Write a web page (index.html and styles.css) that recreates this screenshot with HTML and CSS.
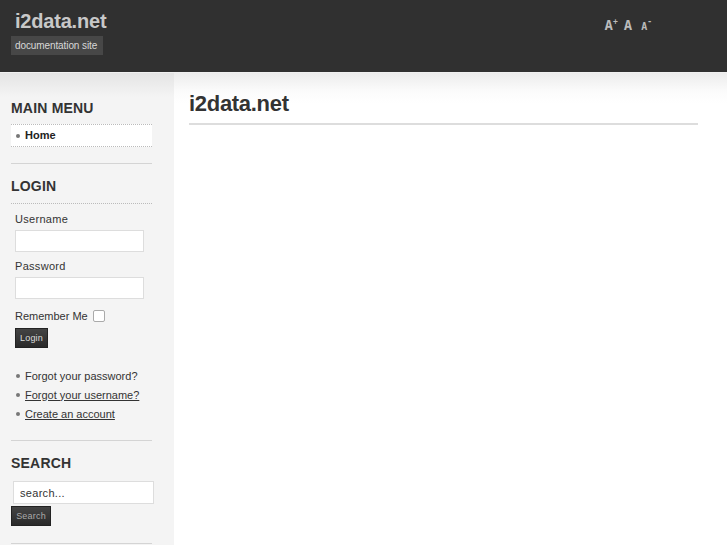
FILE: index.html
```html
<!DOCTYPE html>
<html>
<head>
<meta charset="utf-8">
<link rel="stylesheet" href="styles.css">
</head>
<body>
<header class="header">
  <div class="brand">
    <div class="logo">i2data.net</div>
    <div class="tagline">documentation site</div>
  </div>
  <div class="fontsize">
    <span class="fs big">A<sup>+</sup></span>
    <span class="fs mid">A</span>
    <span class="fs small">A<sup>-</sup></span>
  </div>
</header>
<div class="wrap">
  <aside class="sidebar">
    <section class="module">
      <h3 class="mod-title">Main Menu</h3>
      <ul class="menu">
        <li class="menu-item"><span class="dot"></span>Home</li>
      </ul>
    </section>
    <section class="module">
      <h3 class="mod-title underlined">Login</h3>
      <form class="login">
        <label class="lbl">Username</label>
        <input class="field" type="text">
        <label class="lbl">Password</label>
        <input class="field" type="password">
        <div class="remember">Remember Me <span class="check"></span></div>
        <button type="button" class="btn">Login</button>
        <ul class="links">
          <li><span class="dot"></span>Forgot your password?</li>
          <li><span class="dot"></span><a>Forgot your username?</a></li>
          <li><span class="dot"></span><a>Create an account</a></li>
        </ul>
      </form>
    </section>
    <section class="module">
      <h3 class="mod-title">Search</h3>
      <div class="search">
        <input class="sfield" type="text" value="search...">
        <button type="button" class="btn sbtn">Search</button>
      </div>
    </section>
  </aside>
  <main class="main">
    <h1 class="page-title">i2data.net</h1>
  </main>
</div>
</body>
</html>
```
FILE: styles.css
```css
* { box-sizing: border-box; }
html, body { margin: 0; padding: 0; }
body {
  font-family: "Liberation Sans", Arial, sans-serif;
  background: #fff;
  color: #333;
  width: 727px;
  height: 545px;
  overflow: hidden;
}
.header {
  height: 73px;
  background: #303030;
  display: flex;
  justify-content: space-between;
  border-bottom: 1px solid #f0f0f0;
}
.brand { padding: 9px 0 0 11px; }
.logo {
  font-size: 20px;
  font-weight: bold;
  color: #c8c8c8;
  padding-left: 4px;
  line-height: 24px;
  letter-spacing: -0.2px;
}
.tagline {
  margin-top: 3px;
  display: inline-block;
  background: #474747;
  color: #d8d8d8;
  font-size: 10px;
  padding: 4px 2px 4px 4px;
  line-height: 11px;
  letter-spacing: -0.1px;
  width: 92px;
  white-space: nowrap;
}
.fontsize {
  padding: 17px 75px 0 0;
  display: flex;
  gap: 5px;
  align-items: baseline;
  height: 40px;
}
.fs { font-family: "DejaVu Sans Mono", monospace; color: #bbb; font-weight: bold; }
.fs sup { font-size: 8px; vertical-align: 6px; }
.big { font-size: 14px; }
.mid { font-size: 14px; margin-left: 1px; }
.small { font-size: 10px; margin-left: 4px; }
.wrap {
  display: flex;
  height: 472px;
}
.sidebar {
  width: 174px;
  background: linear-gradient(#e4e4e4 0, #f4f4f4 24px, #f4f4f4 100%);
  padding: 27px 22px 0 11px;
}
.main {
  flex: 1;
  background: linear-gradient(#ececec 0, #fbfbfb 18px, #fff 30px);
  padding: 17px 29px 0 15px;
}
.page-title {
  margin: 0;
  font-size: 22px;
  line-height: 27px;
  color: #333;
  padding-bottom: 6px;
  border-bottom: 2px solid #ddd;
  letter-spacing: -0.3px;
}
.module { border-bottom: 1px solid #d4d4d4; }
.mod-title {
  margin: 0;
  font-size: 14px;
  text-transform: uppercase;
  color: #333;
  line-height: 16px;
  padding-bottom: 8px;
  letter-spacing: 0.2px;
}
.underlined { border-bottom: 1px dotted #bbb; padding-bottom: 9px; }
.module + .module .mod-title { padding-top: 14px; }
.menu { list-style: none; margin: 0 0 16px 0; padding: 0; }
.menu-item {
  background: #fff;
  border-top: 1px dotted #bbb;
  border-bottom: 1px dotted #bbb;
  height: 23px;
  line-height: 21px;
  font-size: 11px;
  font-weight: bold;
  color: #222;
  padding-left: 5px;
  display: flex;
  align-items: center;
}
.dot {
  display: inline-block;
  width: 4px;
  height: 4px;
  border-radius: 50%;
  background: #777;
  margin-right: 5px;
  flex: none;
}
.login { padding: 8px 0 0 4px; font-size: 11px; color: #333; }
.lbl { display: block; line-height: 14px; letter-spacing: 0.3px; margin-bottom: 4px; }
.field {
  display: block;
  width: 129px;
  height: 22px;
  border: 1px solid #ddd;
  background: #fff;
  margin: 0 0 7px 0;
  padding: 0;
}
.remember { display: flex; align-items: center; line-height: 14px; margin-top: 10px; }
.check {
  display: inline-block;
  width: 12px;
  height: 12px;
  border: 1px solid #aaa;
  background: #fff;
  margin-left: 5px;
  border-radius: 2px;
}
.btn {
  display: block;
  background: linear-gradient(#444, #2a2a2a);
  color: #ddd;
  border: 1px solid #222;
  font-family: "Liberation Sans", Arial, sans-serif;
  font-size: 9px;
  height: 20px;
  padding: 0 4px;
  margin-top: 5px;
  letter-spacing: 0.2px;
}
.links { list-style: none; margin: 18px 0 17px 0; padding: 0; }
.links li { display: flex; align-items: center; height: 19px; line-height: 14px; }
.links li .dot { margin-left: 1px; }
.links a { color: #333; text-decoration: underline; }
.search { padding: 2px 0 17px 0; }
.sfield {
  display: block;
  width: 141px;
  height: 23px;
  margin-left: 2px;
  border: 1px solid #ddd;
  background: #fff;
  font-family: "Liberation Sans", Arial, sans-serif;
  font-size: 11px;
  color: #333;
  padding: 0 0 0 6px;
  letter-spacing: 0.3px;
}
.sbtn { margin-top: 2px; width: 40px; height: 20px; color: #aaa; padding: 0; }
```
